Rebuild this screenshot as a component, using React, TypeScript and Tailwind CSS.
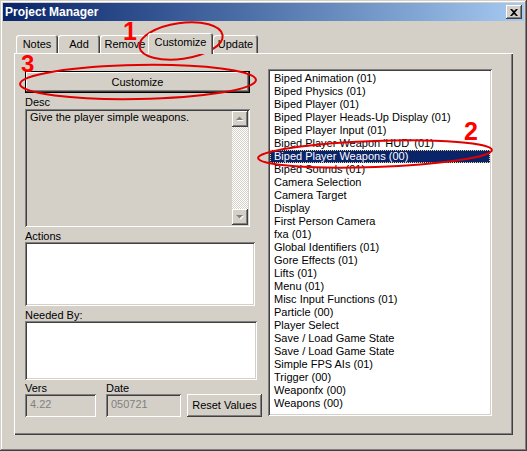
import React from 'react';

// Liste des modules affichés à droite
const modules = [
  'Biped Animation (01)',
  'Biped Physics (01)',
  'Biped Player (01)',
  'Biped Player Heads-Up Display (01)',
  'Biped Player Input (01)',
  "Biped Player Weapon 'HUD' (01)",
  'Biped Player Weapons (00)',
  'Biped Sounds (01)',
  'Camera Selection',
  'Camera Target',
  'Display',
  'First Person Camera',
  'fxa (01)',
  'Global Identifiers (01)',
  'Gore Effects (01)',
  'Lifts (01)',
  'Menu (01)',
  'Misc Input Functions (01)',
  'Particle (00)',
  'Player Select',
  'Save / Load Game State',
  'Save / Load Game State',
  'Simple FPS AIs (01)',
  'Trigger (00)',
  'Weaponfx (00)',
  'Weapons (00)',
];

const selectedIndex = 6;

// Bordures "Windows classique"
const raised =
  'shadow-[inset_-1px_-1px_#404040,inset_1px_1px_#ffffff,inset_-2px_-2px_#808080,inset_2px_2px_#d4d0c8]';
const sunken =
  'shadow-[inset_1px_1px_#808080,inset_-1px_-1px_#ffffff,inset_2px_2px_#404040,inset_-2px_-2px_#d4d0c8]';
const tabBevel =
  'shadow-[inset_1px_1px_#ffffff,inset_-1px_0_#404040,inset_-2px_0_#808080]';

const ScrollArrow: React.FC<{ down?: boolean }> = ({ down }) => (
  <div className={`h-[16px] w-[16px] bg-[#d4d0c8] flex items-center justify-center ${raised}`}>
    <svg width="9" height="6" viewBox="0 0 9 6">
      {down ? (
        <>
          <polygon points="1,2 8,2 4.5,5.5" fill="#ffffff" />
          <polygon points="0,1 7,1 3.5,4.5" fill="#808080" />
        </>
      ) : (
        <>
          <polygon points="1,5 8,5 4.5,1.5" fill="#ffffff" />
          <polygon points="0,4 7,4 3.5,0.5" fill="#808080" />
        </>
      )}
    </svg>
  </div>
);

const Tab: React.FC<{ label: string; width: string; active?: boolean }> = ({ label, width, active }) => (
  <div
    className={`${width} ${tabBevel} rounded-t-[3px] bg-[#d4d0c8] flex justify-center ${
      active ? 'h-[21px] -ml-[2px] -mb-[1px] z-10 pt-[3px]' : 'h-[18px] pt-[3px]'
    }`}
  >
    <span className="leading-[12px]">{label}</span>
  </div>
);

export default function App() {
  return (
    <div className="relative w-[527px] h-[451px] bg-[#d4d0c8] p-[3px] text-[11px] text-black font-['Liberation_Sans',Arial,sans-serif] shadow-[inset_-1px_-1px_#404040,inset_1px_1px_#d4d0c8,inset_-2px_-2px_#808080,inset_2px_2px_#ffffff]">
      {/* Barre de titre */}
      <div className="h-[18px] flex items-center justify-between pl-[2px] pr-[2px] bg-gradient-to-r from-[#0a246a] to-[#a6caf0]">
        <span className="text-white font-bold text-[12px] leading-[14px]">Project Manager</span>
        <div className={`w-[16px] h-[14px] bg-[#d4d0c8] flex items-center justify-center ${raised}`}>
          <svg width="8" height="7" viewBox="0 0 8 7">
            <path d="M0 0 L2 0 L4 2 L6 0 L8 0 L5 3.5 L8 7 L6 7 L4 5 L2 7 L0 7 L3 3.5 Z" fill="#000" />
          </svg>
        </div>
      </div>

      <div className="px-[11px] pt-[12px]">
        {/* Onglets */}
        <div className="h-[20px] flex items-end pl-[2px]">
          <Tab label="Notes" width="w-[42px]" />
          <Tab label="Add" width="w-[42px]" />
          <Tab label="Remove" width="w-[50px]" />
          <Tab label="Customize" width="w-[65px]" active />
          <Tab label="Update" width="w-[45px]" />
        </div>

        {/* Panneau */}
        <div className="h-[382px] flex pt-[16px] pl-[11px] shadow-[inset_1px_1px_#ffffff,inset_-1px_-1px_#404040,inset_-2px_-2px_#808080]">
          <div className="w-[237px] flex flex-col">
            <button className={`mt-[2px] h-[22px] w-[225px] bg-[#d4d0c8] border border-black ${raised}`}>
              Customize
            </button>

            <div className="mt-[3px] h-[13px] leading-[13px]">Desc</div>
            <div className={`h-[118px] w-[225px] bg-[#d4d0c8] flex p-[2px] ${sunken}`}>
              <div className="flex-1 px-[3px] leading-[13px]">Give the player simple weapons.</div>
              <div className="w-[16px] flex flex-col">
                <ScrollArrow />
                <div className="flex-1 bg-[repeating-conic-gradient(#d4d0c8_0%_25%,#ffffff_0%_50%)] bg-[length:2px_2px]" />
                <ScrollArrow down />
              </div>
            </div>

            <div className="mt-[3px] h-[12px] leading-[12px]">Actions</div>
            <div className={`h-[64px] w-[230px] bg-white ${sunken}`} />

            <div className="mt-[3px] h-[12px] leading-[12px]">Needed By:</div>
            <div className={`h-[59px] w-[232px] bg-white ${sunken}`} />

            <div className="mt-[2px] h-[12px] leading-[12px] flex">
              <span className="w-[81px]">Vers</span>
              <span>Date</span>
            </div>
            <div className="h-[23px] flex">
              <div className={`w-[71px] bg-[#d4d0c8] text-[#808080] pl-[5px] pt-[4px] leading-[13px] ${sunken}`}>4.22</div>
              <div className={`ml-[10px] w-[75px] bg-[#d4d0c8] text-[#808080] pl-[5px] pt-[4px] leading-[13px] ${sunken}`}>050721</div>
              <button className={`ml-[6px] w-[75px] bg-[#d4d0c8] ${raised}`}>Reset Values</button>
            </div>
          </div>

          {/* Liste des modules */}
          <div className={`ml-[6px] w-[224px] h-[347px] bg-white p-[2px] pt-[3px] ${sunken}`}>
            {modules.map((m, i) =>
              i === selectedIndex ? (
                <div
                  key={i}
                  className="h-[13px] leading-[11px] pl-[3px] bg-[#0a246a] text-white border border-dotted border-[#e8d48a] whitespace-nowrap"
                >
                  {m}
                </div>
              ) : (
                <div key={i} className="h-[13px] leading-[13px] pl-[4px] whitespace-nowrap">
                  {m}
                </div>
              )
            )}
          </div>
        </div>
      </div>

      {/* Annotations en rouge */}
      <svg className="absolute inset-0 pointer-events-none" width="527" height="451" viewBox="0 0 527 451">
        <g fill="none" stroke="#e00000" strokeWidth="2">
          <ellipse cx="181" cy="41" rx="42" ry="18" transform="rotate(-8 181 41)" />
          <ellipse cx="138" cy="82" rx="118" ry="17" transform="rotate(-1 138 82)" />
          <ellipse cx="375" cy="154" rx="117" ry="13" transform="rotate(-2 375 154)" />
        </g>
        <g fill="#ff0000" fontWeight="bold" fontFamily="'Liberation Sans', Arial, sans-serif">
          <text x="123" y="40" fontSize="25">1</text>
          <text x="464" y="140" fontSize="25">2</text>
          <text x="21" y="72" fontSize="24">3</text>
        </g>
      </svg>
    </div>
  );
}
